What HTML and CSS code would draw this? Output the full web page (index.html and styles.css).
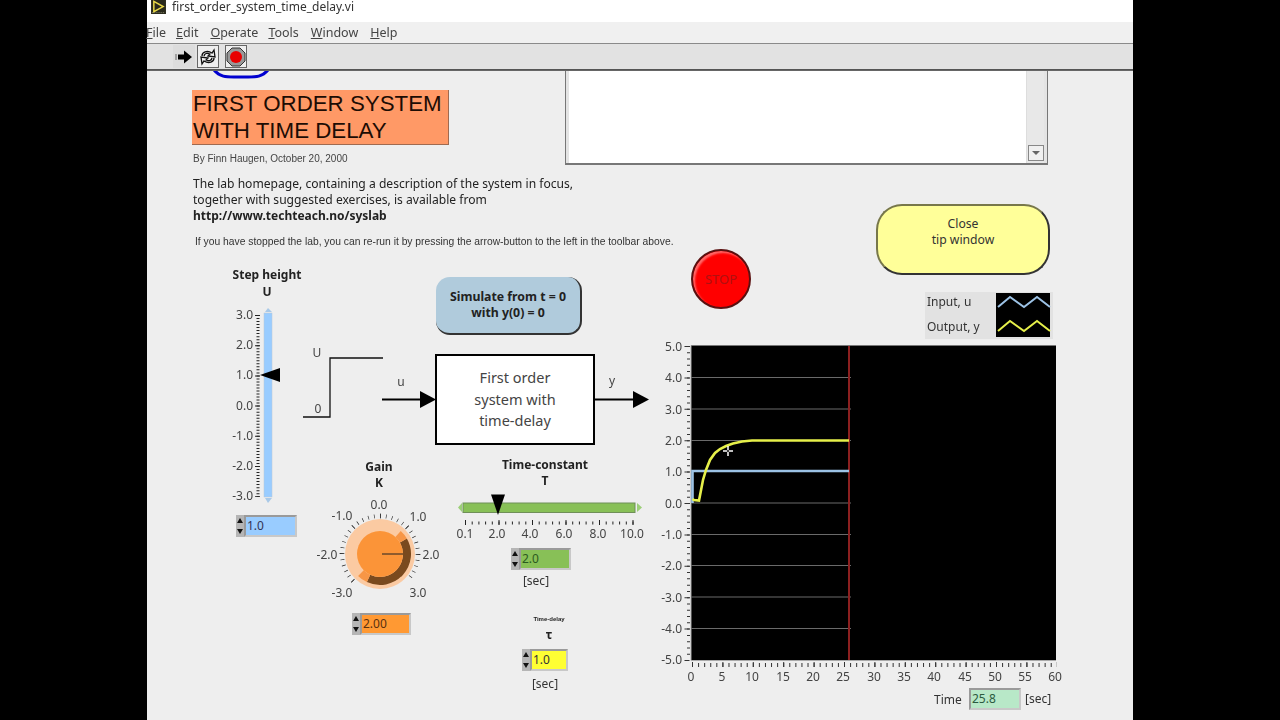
FILE: index.html
```html
<!DOCTYPE html>
<html lang="en">
<head>
  <meta charset="UTF-8">
  <title>first_order_system_time_delay.vi</title>
  <link rel="stylesheet" href="styles.css">
</head>
<body>
  <div class="window">
    <!-- Title bar -->
    <div class="titlebar">
      <svg class="vi-icon" viewBox="0 0 16 15">
        <rect width="16" height="15" fill="#2a2a1c"/>
        <path d="M3 1.5 L13 7 L3 12.5 Z" fill="#2a2a1c" stroke="#e8d848" stroke-width="1.6"/>
        <path d="M1 13.5 H15" stroke="#8a8a70" stroke-width="1" stroke-dasharray="1 1"/>
      </svg>
      <span>first_order_system_time_delay.vi</span>
    </div>

    <!-- Menu -->
    <div class="menubar">
      <span class="menu-file"><u>F</u>ile</span>
      <span class="menu-edit"><u>E</u>dit</span>
      <span class="menu-operate"><u>O</u>perate</span>
      <span><u>T</u>ools</span>
      <span><u>W</u>indow</span>
      <span><u>H</u>elp</span>
    </div>

    <!-- Toolbar -->
    <div class="toolbar">
      <div class="tool tool-run">
        <svg viewBox="0 0 20 20" width="20" height="20">
          <path d="M1 8 H3 M1 10 H3 M1 12 H3" stroke="#666" stroke-width="1"/>
          <path d="M4 7.5 H10 V3.5 L18 10 L10 16.5 V12.5 H4 Z" fill="#000"/>
        </svg>
      </div>
      <div class="tool tool-loop">
        <svg viewBox="0 0 20 20" width="20" height="20" fill="none" stroke="#111" stroke-width="1.3">
          <path d="M4 9 C4 5 9 3 14 6 L16 3 L17 10 L10 9 L12 7 C9 5.5 6.5 6.5 6 9"/>
          <path d="M16 11 C16 15 11 17 6 14 L4 17 L3 10 L10 11 L8 13 C11 14.5 13.5 13.5 14 11"/>
        </svg>
      </div>
      <div class="tool tool-abort">
        <svg viewBox="0 0 20 20" width="20" height="20">
          <path d="M6 1 H14 L19 6 V14 L14 19 H6 L1 14 V6 Z" fill="#999" stroke="#333" stroke-width="1"/>
          <circle cx="10" cy="10" r="6" fill="#e80000"/>
        </svg>
      </div>
    </div>

    <!-- Front panel: free canvas, controls sit where the VI author dropped them -->
    <div class="panel">
      <svg class="art" viewBox="147 70 986 650">
        <!-- decoration peeking out from above -->
        <path d="M214 70 C220 77 226 77 234 77 H248 C256 77 262 77 268 70" fill="none" stroke="#0000d0" stroke-width="3"/>

        <!-- step height slider -->
        <text class="lbl-b" x="267" y="279" text-anchor="middle">Step height</text>
        <text class="lbl-b" x="267" y="296" text-anchor="middle">U</text>
        <g class="axis" text-anchor="end">
          <text x="253" y="319">3.0</text>
          <text x="253" y="349">2.0</text>
          <text x="253" y="379">1.0</text>
          <text x="253" y="410">0.0</text>
          <text x="253" y="440">-1.0</text>
          <text x="253" y="470">-2.0</text>
          <text x="253" y="500">-3.0</text>
        </g>
        <path d="M258 315 V497" stroke="#222" stroke-width="3" stroke-dasharray="1 2.02"/>
        <path d="M257.5 315 V497" stroke="#222" stroke-width="5" stroke-dasharray="1 29.2"/>
        <path d="M265 312 L268 308 L272 312 Z" fill="#a9c9e8"/>
        <path d="M265 498 L268 503 L272 498 Z" fill="#a9c9e8"/>
        <rect x="264" y="313" width="8" height="184" fill="#99ccff" stroke="#b8c8d8" stroke-width="0.5"/>
        <path d="M260 375 L280 368 V382 Z" fill="#000"/>

        <!-- step input sketch -->
        <path d="M303 417 H330 V358 H383" fill="none" stroke="#111" stroke-width="1.3"/>
        <text class="lbl" x="317" y="357" text-anchor="middle">U</text>
        <text class="lbl" x="318" y="413" text-anchor="middle">0</text>
        <text class="lbl" x="401" y="386" text-anchor="middle">u</text>
        <path d="M382 399.5 H424" stroke="#000" stroke-width="2"/>
        <path d="M420 391 L436 399.5 L420 408 Z" fill="#000"/>
        <text class="lbl" x="612" y="385" text-anchor="middle">y</text>
        <path d="M594 399.5 H636" stroke="#000" stroke-width="2"/>
        <path d="M633 391 L649 399.5 L633 408 Z" fill="#000"/>

        <!-- gain knob -->
        <text class="lbl-b" x="379" y="471" text-anchor="middle">Gain</text>
        <text class="lbl-b" x="379" y="487" text-anchor="middle">K</text>
        <g class="axis" text-anchor="middle">
          <text x="379" y="509">0.0</text>
          <text x="342" y="520">-1.0</text>
          <text x="418" y="521">1.0</text>
          <text x="327" y="559">-2.0</text>
          <text x="431" y="559">2.0</text>
          <text x="342" y="597">-3.0</text>
          <text x="418" y="597">3.0</text>
        </g>
        <path d="M353.13 580.87 A38 38 0 1 1 406.87 580.87" fill="none" stroke="#222" stroke-width="4" pathLength="270" stroke-dasharray="0.9 8.1"/>
        <path d="M353.13 580.87 A38 38 0 1 1 406.87 580.87" fill="none" stroke="#222" stroke-width="5" pathLength="270" stroke-dasharray="1 44"/>
        <circle cx="380" cy="554" r="35" fill="#fbcaa2"/>
        <path d="M403.38 540.5 A27 27 0 0 1 368.59 578.47" fill="none" stroke="#7a4a1e" stroke-width="8"/>
        <path d="M398.07 533.93 A27 27 0 0 1 403.38 540.5" fill="none" stroke="#f79646" stroke-width="8"/>
        <path d="M368.59 578.47 A27 27 0 0 1 360.91 573.09" fill="none" stroke="#f79646" stroke-width="8"/>
        <circle cx="380" cy="554" r="23" fill="#fb9438"/>
        <path d="M382 554 H403" stroke="#222" stroke-width="1"/>

        <!-- time constant slider -->
        <text class="lbl-b" x="545" y="469" text-anchor="middle">Time-constant</text>
        <text class="lbl-b" x="545" y="485" text-anchor="middle">T</text>
        <path d="M462 503 L458 507.5 L462 512 Z" fill="#9ccf78"/>
        <path d="M637 503 L642 507.5 L637 512 Z" fill="#9ccf78"/>
        <rect x="463" y="503" width="172" height="9.5" fill="#88c057" stroke="#6f8f58" stroke-width="1"/>
        <path d="M491 494.5 H505 L498 515 Z" fill="#000"/>
        <path d="M465 523 H634" stroke="#222" stroke-width="3" stroke-dasharray="1 5.7"/>
        <path d="M465 522.5 H634" stroke="#222" stroke-width="5" stroke-dasharray="1 32.5"/>
        <g class="axis" text-anchor="middle">
          <text x="465" y="538">0.1</text>
          <text x="497" y="538">2.0</text>
          <text x="530" y="538">4.0</text>
          <text x="564" y="538">6.0</text>
          <text x="598" y="538">8.0</text>
          <text x="632" y="538">10.0</text>
        </g>
        <text class="lbl-s" x="536" y="585" text-anchor="middle">[sec]</text>

        <!-- time delay -->
        <text class="lbl-tiny" x="549" y="621" text-anchor="middle">Time-delay</text>
        <text class="lbl-b" x="549" y="639" text-anchor="middle">τ</text>
        <text class="lbl-s" x="545" y="688" text-anchor="middle">[sec]</text>

        <!-- legend -->
        <rect x="925" y="292" width="128" height="47" fill="#e2e2e2"/>
        <text class="lbl-s" x="927" y="306">Input, u</text>
        <text class="lbl-s" x="927" y="331">Output, y</text>
        <rect x="996" y="293" width="54" height="44" fill="#000"/>
        <path d="M998 307 L1010 297 L1024 307 L1037 297 L1050 307" fill="none" stroke="#9cc2e5" stroke-width="2"/>
        <path d="M998 331 L1010 321 L1024 331 L1037 321 L1050 331" fill="none" stroke="#e6f04a" stroke-width="2"/>

        <!-- chart -->
        <g class="axis" text-anchor="end">
          <text x="682" y="351">5.0</text>
          <text x="682" y="382">4.0</text>
          <text x="682" y="414">3.0</text>
          <text x="682" y="445">2.0</text>
          <text x="682" y="476">1.0</text>
          <text x="682" y="508">0.0</text>
          <text x="682" y="539">-1.0</text>
          <text x="682" y="570">-2.0</text>
          <text x="682" y="602">-3.0</text>
          <text x="682" y="633">-4.0</text>
          <text x="682" y="664">-5.0</text>
        </g>
        <path d="M688.5 346 V660" stroke="#333" stroke-width="3" stroke-dasharray="1 5.28"/>
        <path d="M687 346 V661" stroke="#333" stroke-width="5" stroke-dasharray="1 30.4"/>
        <rect x="691" y="345.5" width="365" height="315" fill="#000"/>
        <path d="M691 345.5 V660.5 H1056" fill="none" stroke="#aaa" stroke-width="1"/>
        <g stroke="#6a6a6a" stroke-width="1">
          <path d="M691 377.5 H851"/>
          <path d="M691 409 H851"/>
          <path d="M691 440.5 H851"/>
          <path d="M691 503 H851"/>
          <path d="M691 534.5 H851"/>
          <path d="M691 565.5 H851"/>
          <path d="M691 597 H851"/>
          <path d="M691 628.5 H851"/>
        </g>
        <path d="M849 346 V660" stroke="#8c2020" stroke-width="2"/>
        <path d="M692.5 503 V471 H849" fill="none" stroke="#9cc2e5" stroke-width="2.6"/>
        <path d="M692.5 499 L694 500 L699 500.5 L703 480 L706 470 L710 460 L715 453 L720 449 L726 446 L733 443.5 L742 441.5 L752 440.5 H849" fill="none" stroke="#e6f04a" stroke-width="2.6"/>
        <path d="M728 446 V456 M723 451 H733" stroke="#fff" stroke-width="1.5"/>
        <circle cx="728" cy="451" r="1" fill="#000"/>
        <path d="M692 665 H1056" stroke="#333" stroke-width="4" stroke-dasharray="1 5.08"/>
        <path d="M692 664.5 H1057" stroke="#333" stroke-width="5" stroke-dasharray="1 29.4"/>
        <g class="axis" text-anchor="middle">
          <text x="691" y="681">0</text>
          <text x="722" y="681">5</text>
          <text x="752" y="681">10</text>
          <text x="783" y="681">15</text>
          <text x="813" y="681">20</text>
          <text x="843" y="681">25</text>
          <text x="874" y="681">30</text>
          <text x="904" y="681">35</text>
          <text x="934" y="681">40</text>
          <text x="965" y="681">45</text>
          <text x="995" y="681">50</text>
          <text x="1025" y="681">55</text>
          <text x="1055" y="681">60</text>
        </g>
        <text class="lbl-s" x="934" y="704">Time</text>
        <text class="lbl-s" x="1025" y="703">[sec]</text>
      </svg>

      <div class="title-box">FIRST ORDER SYSTEM<br>WITH TIME DELAY</div>
      <div class="byline">By Finn Haugen, October 20, 2000</div>
      <div class="intro">
        The lab homepage, containing a description of the system in focus,<br>
        together with suggested exercises, is available from<br>
        <b>http://www.techteach.no/syslab</b>
      </div>
      <div class="rerun">If you have stopped the lab, you can re-run it by pressing the arrow-button to the left in the toolbar above.</div>

      <div class="tip-window">
        <div class="tip-text"></div>
        <div class="tip-scroll"><div class="scroll-down"></div></div>
      </div>

      <div class="btn-close">Close<br>tip window</div>
      <div class="btn-stop">STOP</div>
      <div class="btn-simulate">Simulate from t = 0<br>with y(0) = 0</div>
      <div class="block">First order<br>system with<br>time-delay</div>

      <div class="num num-step"><div class="spin"></div><div class="field">1.0</div></div>
      <div class="num num-gain"><div class="spin"></div><div class="field">2.00</div></div>
      <div class="num num-tc"><div class="spin"></div><div class="field">2.0</div></div>
      <div class="num num-delay"><div class="spin"></div><div class="field">1.0</div></div>
      <div class="num num-time"><div class="field">25.8</div></div>
    </div>
  </div>
</body>
</html>
```

FILE: styles.css
```css
html, body {
  margin: 0;
  height: 720px;
  overflow: hidden;
  background: #000;
}

/* the reference is a video still, everything is a little soft */
.window {
  width: 986px;
  height: 720px;
  margin: 0 auto;
  display: flex;
  flex-direction: column;
  background: #eeeeee;
  font-family: "Noto Sans", sans-serif;
  color: #222;
  filter: blur(0.35px);
}

.titlebar {
  height: 22px;
  flex: none;
  display: flex;
  align-items: flex-start;
  gap: 6px;
  padding-left: 4px;
  background: #fff;
  font-size: 12px;
  line-height: 13px;
  color: #333;
}

.vi-icon {
  width: 15px;
  height: 14px;
}

.menubar {
  height: 21px;
  flex: none;
  display: flex;
  align-items: center;
  gap: 12px;
  background: #f0f0f0;
  border-bottom: 1px solid #8a8a8a;
  font-size: 12.5px;
  color: #444;
}

.menu-file { margin-left: -1px; margin-right: -2px; }
.menu-operate { margin-right: -2px; }

.toolbar {
  position: relative;
  z-index: 1;
  height: 26px;
  flex: none;
  display: flex;
  align-items: center;
  padding-left: 26px;
  background: #e2e2e2;
  border-bottom: 1px solid #555;
  box-shadow: 0 1px 0 #666;
  box-sizing: border-box;
}

.tool {
  width: 20px;
  height: 21px;
  display: flex;
  align-items: center;
  justify-content: center;
  margin-right: 6px;
  border: 1px solid transparent;
}

.tool-run { margin-right: 2px; background: #dcdcdc; }
.tool-loop, .tool-abort { background: #efefef; border-color: #666; }

.panel {
  position: relative;
  flex: 1;
  overflow: hidden;
  background: #eeeeee;
}

.art {
  position: absolute;
  left: 0;
  top: 0;
  width: 986px;
  height: 650px;
}

.art text { font-family: "Noto Sans", sans-serif; fill: #333; }
.art .lbl { font-size: 12px; fill: #444; }
.art .lbl-b { font-size: 12px; font-weight: 700; fill: #222; }
.art .lbl-s { font-size: 12px; fill: #333; }
.art .lbl-tiny { font-size: 6px; font-weight: 700; fill: #222; font-family: "Liberation Sans", sans-serif; }
.art .axis text { font-size: 12px; fill: #444; }

.title-box {
  position: absolute;
  left: 45px;
  top: 20px;
  width: 257px;
  height: 55px;
  box-sizing: border-box;
  padding-left: 1px;
  background: #ff9966;
  border-right: 1px solid #a06a50;
  border-bottom: 1px solid #a06a50;
  font-family: "Liberation Sans", sans-serif;
  font-size: 22.3px;
  line-height: 27px;
  color: #1c0c04;
  white-space: nowrap;
}

.byline {
  position: absolute;
  left: 46px;
  top: 83px;
  font-family: "Liberation Sans", sans-serif;
  font-size: 10px;
  line-height: 12px;
  color: #444;
}

.intro {
  position: absolute;
  left: 46px;
  top: 106px;
  font-size: 12.1px;
  line-height: 16px;
  color: #222;
  white-space: nowrap;
}

.intro b { font-size: 12px; }

.rerun {
  position: absolute;
  left: 48px;
  top: 166px;
  font-family: "Liberation Sans", sans-serif;
  font-size: 10.3px;
  line-height: 12px;
  color: #333;
  white-space: nowrap;
}

.tip-window {
  position: absolute;
  left: 418px;
  top: -4px;
  width: 483px;
  height: 99px;
  box-sizing: border-box;
  display: flex;
  padding: 0 3px 0 3px;
  background: #e4e4e4;
  border: 1px solid #777;
  border-bottom-width: 2px;
}

.tip-text {
  flex: 1;
  background: #fff;
}

.tip-scroll {
  width: 17px;
  position: relative;
  background: #e8e8e8;
  border-left: 1px solid #ddd;
}

.scroll-down {
  position: absolute;
  right: 0;
  bottom: 2px;
  width: 16px;
  height: 16px;
  background: #f0f0f0;
  border: 1px solid #888;
  box-sizing: border-box;
}

.scroll-down::after {
  content: "";
  position: absolute;
  left: 3px;
  top: 5px;
  border-left: 4px solid transparent;
  border-right: 4px solid transparent;
  border-top: 4px solid #666;
}

.btn-close {
  position: absolute;
  left: 729px;
  top: 134px;
  width: 174px;
  height: 71px;
  box-sizing: border-box;
  padding-top: 10px;
  background: #ffff99;
  border: 2px solid #77774a;
  border-right-color: #333;
  border-bottom-color: #333;
  border-radius: 26px;
  text-align: center;
  font-size: 12.2px;
  line-height: 16px;
  color: #333;
}

.btn-stop {
  position: absolute;
  left: 544px;
  top: 179px;
  width: 60px;
  height: 60px;
  box-sizing: border-box;
  display: flex;
  align-items: center;
  justify-content: center;
  background: #ff0000;
  border: 2px solid #5a1010;
  border-radius: 50%;
  box-shadow: inset 2px 2px 2px #ff6a6a;
  font-size: 13px;
  color: #b01010;
}

.btn-simulate {
  position: absolute;
  left: 289px;
  top: 207px;
  width: 146px;
  height: 58px;
  box-sizing: border-box;
  padding-top: 12px;
  background: #b0cbdc;
  border-right: 2px solid #333;
  border-bottom: 2px solid #333;
  border-radius: 14px;
  text-align: center;
  font-size: 12.3px;
  font-weight: 700;
  line-height: 16px;
  color: #222;
}

.block {
  position: absolute;
  left: 288px;
  top: 284px;
  width: 160px;
  height: 91px;
  box-sizing: border-box;
  padding-top: 11px;
  background: #fff;
  border: 2px solid #000;
  text-align: center;
  font-size: 14.5px;
  line-height: 21.5px;
  color: #444;
}

/* numeric controls: spinner plus inset field */
.num {
  position: absolute;
  display: flex;
  height: 22px;
}

.spin {
  width: 8px;
  flex: none;
  position: relative;
  background: #b5b5b5;
}

.spin::before, .spin::after {
  content: "";
  position: absolute;
  left: 1px;
  border-left: 3px solid transparent;
  border-right: 3px solid transparent;
}

.spin::before { top: 3px; border-bottom: 5px solid #111; }
.spin::after { bottom: 3px; border-top: 5px solid #111; }

.field {
  flex: 1;
  box-sizing: border-box;
  padding-left: 1px;
  border: 2px solid #9a9a9a;
  border-right-color: #c8c8c8;
  border-bottom-color: #c8c8c8;
  font-size: 12px;
  line-height: 18px;
}

.num-step { left: 89px; top: 445px; width: 61px; }
.num-step .field { background: #99ccff; color: #335; }
.num-gain { left: 205px; top: 543px; width: 59px; }
.num-gain .field { background: #ff9933; color: #5a3010; }
.num-tc { left: 364px; top: 478px; width: 60px; }
.num-tc .field { background: #88c057; color: #2c5a20; }
.num-delay { left: 375px; top: 579px; width: 46px; }
.num-delay .field { background: #ffff33; color: #333; }
.num-time { left: 822px; top: 618px; width: 52px; }
.num-time .field { background: #b8e8c8; color: #2c5a40; }
```
